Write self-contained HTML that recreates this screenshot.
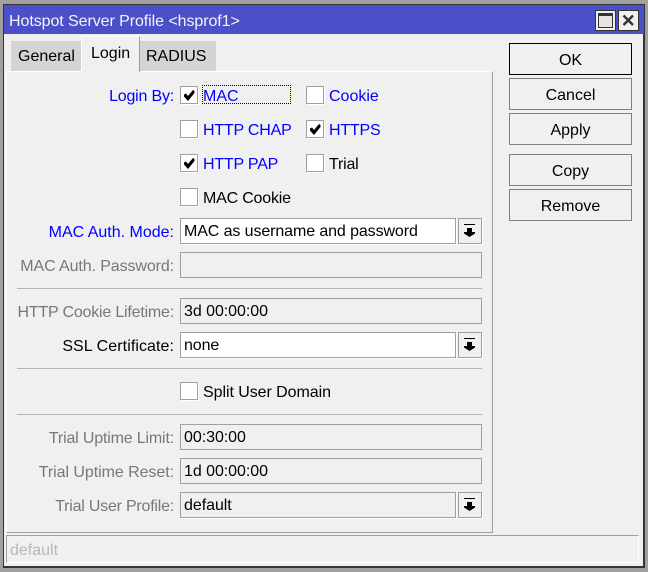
<!DOCTYPE html>
<html><head><meta charset="utf-8">
<style>
html,body{margin:0;padding:0;width:648px;height:572px;overflow:hidden;background:#a0a0a0}
*{box-sizing:border-box}
body{font:16px/20px "Liberation Sans",Arial,sans-serif;color:#000;position:relative}
div,span.a{position:absolute}
.t{white-space:nowrap;height:20px;margin-top:2px}
.r{text-align:right;left:0;width:174px}
.b{color:#0000ff}
.g{color:#777}
.f{left:180px;height:26px;border:1px solid #a0a0a0;padding:3px 3px 0;white-space:nowrap;line-height:20px;width:302px;letter-spacing:-.05px}
.w{background:#fff;width:276px;box-shadow:1px 1px 0 #fff;letter-spacing:-.1px}
.dd{left:458px;width:24px;height:26px;border:1px solid #a0a0a0;background:#f0f0f0;box-shadow:1px 1px 0 #fff}
.c{width:18px;height:18px;border:1px solid #a0a0a0;background:#fff;box-shadow:1px 1px 0 #fff}
.btn{left:509px;width:123px;height:32px;border:1px solid #808080;text-align:center;line-height:33px;background:#f0f0f0}
.sep{left:17px;width:465px;height:1px;background:#b4b4b4}
svg{position:absolute;display:block}
</style></head><body>
<div style="left:3px;top:4px;width:642px;height:564px;background:#f0f0f0;border:1px solid #333;border-right:2px solid #333;border-bottom:2px solid #333"></div>
<div style="left:4px;top:5px;width:640px;height:29px;background:#4c50c8"></div>
<div class="t" style="left:9px;top:10px;color:#f4f4f4;letter-spacing:-.07px">Hotspot Server Profile &lt;hsprof1&gt;</div>

<div style="left:595px;top:10px;width:21px;height:21px;background:#f0f0f0;border:1px solid #333"></div>
<div style="left:598px;top:13px;width:15px;height:15px;background:#e8e4e4;border:1px solid #333;border-top:3px solid #333"></div>
<div style="left:618px;top:10px;width:21px;height:21px;background:#f0f0f0;border:1px solid #333"></div>
<svg style="left:618px;top:10px" width="21" height="21"><path d="M5.500 5.500L15 15M15 5.500L5.500 15" stroke="#333" stroke-width="2.400"/></svg>

<div style="left:11px;top:41px;width:70px;height:30px;background:#d4d4d4"></div>
<div class="t" style="left:18px;top:45px">General</div>
<div style="left:139px;top:41px;width:78px;height:30px;background:#d4d4d4;border-right:1px solid #f4f4f4"></div>
<div class="t" style="left:146px;top:45px">RADIUS</div>

<div style="left:6px;top:71px;width:487px;height:462px;background:#f0f0f0;border-top:1px solid #fff;border-left:1px solid #fff;border-right:1px solid #a0a0a0;border-bottom:1px solid #a0a0a0"></div>
<div style="left:81px;top:36px;width:59px;height:36px;background:#f0f0f0;border-top:1px solid #fff;border-left:1px solid #fff;border-right:1px solid #a0a0a0"></div>
<div class="t" style="left:91px;top:42px">Login</div>

<div class="btn" style="top:43px;border-color:#000">OK</div>
<div class="btn" style="top:78px">Cancel</div>
<div class="btn" style="top:113px">Apply</div>
<div class="btn" style="top:154px">Copy</div>
<div class="btn" style="top:189px">Remove</div>

<div class="t r b" style="top:85px;letter-spacing:-.2px">Login By:</div>
<div class="c" style="left:180px;top:86px"></div>
<svg style="left:180px;top:86px" width="18" height="18"><path d="M4 8.500L6 7.500L8 10L13 4L14.500 5V7L8 15L4 10.500Z" fill="#000"/></svg>
<div style="left:202px;top:85px;width:89px;height:19px;border:1px dotted #000;background:#ffffc0;"></div>
<div style="left:203px;top:86px;width:87px;height:17px;background:#f0f0f0"></div>
<div class="t b" style="left:203px;top:85px">MAC</div>
<div class="c" style="left:306px;top:86px"></div>
<div class="t b" style="left:329px;top:85px">Cookie</div>

<div class="c" style="left:180px;top:120px"></div>
<div class="t b" style="left:203px;top:119px;letter-spacing:-.2px">HTTP CHAP</div>
<div class="c" style="left:306px;top:120px"></div>
<svg style="left:306px;top:120px" width="18" height="18"><path d="M4 8.500L6 7.500L8 10L13 4L14.500 5V7L8 15L4 10.500Z" fill="#000"/></svg>
<div class="t b" style="left:329px;top:119px;letter-spacing:-.2px">HTTPS</div>

<div class="c" style="left:180px;top:154px"></div>
<svg style="left:180px;top:154px" width="18" height="18"><path d="M4 8.500L6 7.500L8 10L13 4L14.500 5V7L8 15L4 10.500Z" fill="#000"/></svg>
<div class="t b" style="left:203px;top:153px;letter-spacing:-.2px">HTTP PAP</div>
<div class="c" style="left:306px;top:154px"></div>
<div class="t" style="left:329px;top:153px;letter-spacing:-.2px">Trial</div>

<div class="c" style="left:180px;top:188px"></div>
<div class="t" style="left:203px;top:187px;letter-spacing:-.2px">MAC Cookie</div>

<div class="t r b" style="top:221px">MAC Auth. Mode:</div>
<div class="f w" style="top:218px">MAC as username and password</div>
<div class="dd" style="top:218px"></div>
<svg style="left:458px;top:218px" width="24" height="26"><path d="M6 6.500H17" stroke="#000"/><path d="M9 10H14V14H17V15.500L11.500 19L6 15.500V14H9Z" fill="#000"/></svg>

<div class="t r g" style="top:255px;letter-spacing:-.1px">MAC Auth. Password:</div>
<div class="f" style="top:252px"></div>
<div class="sep" style="top:288px"></div>

<div class="t r g" style="top:301px;letter-spacing:-.2px">HTTP Cookie Lifetime:</div>
<div class="f" style="top:298px">3d 00:00:00</div>

<div class="t r" style="top:335px;letter-spacing:.07px">SSL Certificate:</div>
<div class="f w" style="top:332px">none</div>
<div class="dd" style="top:332px"></div>
<svg style="left:458px;top:332px" width="24" height="26"><path d="M6 6.500H17" stroke="#000"/><path d="M9 10H14V14H17V15.500L11.500 19L6 15.500V14H9Z" fill="#000"/></svg>
<div class="sep" style="top:368px"></div>

<div class="c" style="left:180px;top:382px"></div>
<div class="t" style="left:203px;top:381px;letter-spacing:-.06px">Split User Domain</div>
<div class="sep" style="top:414px"></div>

<div class="t r g" style="top:427px;letter-spacing:-.17px">Trial Uptime Limit:</div>
<div class="f" style="top:424px">00:30:00</div>
<div class="t r g" style="top:461px;letter-spacing:-.06px">Trial Uptime Reset:</div>
<div class="f" style="top:458px">1d 00:00:00</div>
<div class="t r g" style="top:495px;letter-spacing:-.22px">Trial User Profile:</div>
<div class="f" style="top:492px;width:276px;box-shadow:1px 1px 0 #fff">default</div>
<div class="dd" style="top:492px"></div>
<svg style="left:458px;top:492px" width="24" height="26"><path d="M6 6.500H17" stroke="#000"/><path d="M9 10H14V14H17V15.500L11.500 19L6 15.500V14H9Z" fill="#000"/></svg>

<div style="left:6px;top:535px;width:633px;height:28px;border-top:1px solid #a0a0a0;border-left:1px solid #a0a0a0;border-right:1px solid #fff;border-bottom:1px solid #fff"></div>
<div class="t" style="left:10px;top:539px;color:#b8b8b8">default</div>
</body></html>
